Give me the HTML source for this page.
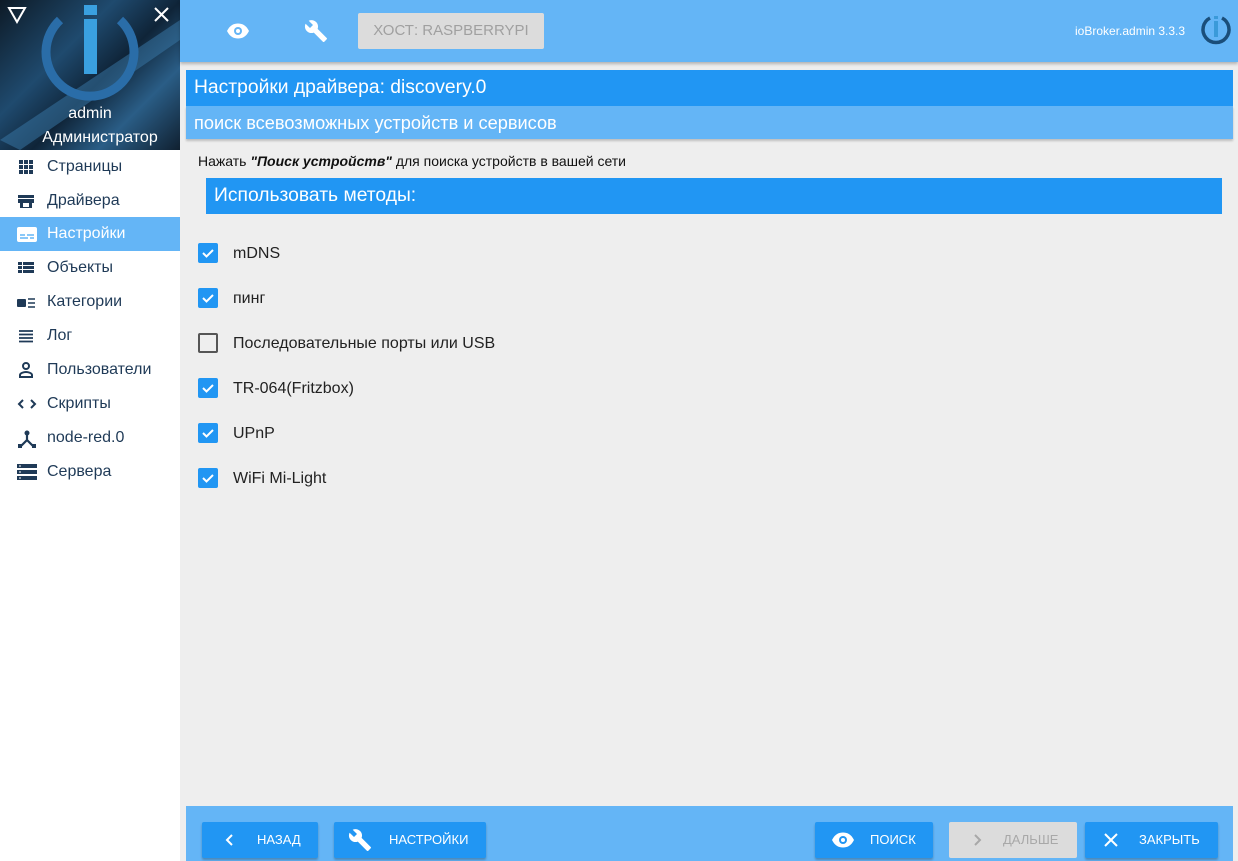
<!DOCTYPE html>
<html><head><meta charset="utf-8"><style>
*{box-sizing:border-box;margin:0;padding:0}
body{width:1238px;height:861px;overflow:hidden;background:#eeeeee;font-family:"Liberation Sans",sans-serif;position:relative}
.side{position:absolute;left:0;top:0;width:180px;height:861px;background:#fff}
.hdr{position:absolute;left:0;top:0;width:180px;height:150px;background:linear-gradient(135deg,#0d1a26 0%,#1f4a6e 35%,#0f2438 55%,#2a5d86 75%,#102030 100%);overflow:hidden}
.nav{position:absolute;left:0;width:180px;height:34px;font-size:16px;color:#1f3a57;line-height:34px;padding-left:47px}
.nav svg{position:absolute;left:17px;top:8px}
.nav.act{background:#64b5f6;color:#fff}
.top{position:absolute;left:180px;top:0;width:1058px;height:62px;background:#64b5f6;box-shadow:0 2px 3px rgba(0,0,0,.25)}
.host{position:absolute;left:178px;top:13px;width:186px;height:36px;background:#dcdcdc;border-radius:2px;color:#a0a0a0;font-size:15px;line-height:36px;text-align:center}
.t1{position:absolute;left:186px;top:70px;width:1047px;height:36px;background:#2196f3;color:#fff;font-size:19.3px;line-height:36px;padding-left:8px}
.t2{position:absolute;left:186px;top:106px;width:1047px;height:33px;background:#64b5f6;color:#fff;font-size:18.2px;line-height:35px;padding-left:8px;box-shadow:0 2px 2px rgba(0,0,0,.2)}
.note{position:absolute;left:198px;top:153px;font-size:14px;color:#111}
.t3{position:absolute;left:206px;top:178px;width:1016px;height:36px;background:#2196f3;color:#fff;font-size:19.3px;line-height:36px;padding-left:8px}
.cb{position:absolute;left:198px;width:20px;height:20px;border-radius:2px;background:#2196f3}
.cb.off{background:transparent;border:2px solid #555}
.lb{position:absolute;left:233px;font-size:16px;color:#222}
.foot{position:absolute;left:186px;top:806px;width:1047px;height:55px;background:#64b5f6}
.btn{position:absolute;top:16px;height:36px;background:#2196f3;color:#fff;font-size:13px;line-height:36px;border-radius:2px;box-shadow:0 2px 2px rgba(0,0,0,.25)}
.btn svg{position:absolute;top:8px}
.btn span{position:absolute}
</style></head><body>
<div class="side">
<div class="hdr">
<svg width="180" height="150" style="position:absolute;left:0;top:0">
<path d="M0 140 L180 20 L180 40 L20 150 Z" fill="#3a7aaa" opacity=".5"/>
<path d="M60 20 A44 44 0 1 0 120 20" fill="none" stroke="#2a6da8" stroke-width="9"/>
<rect x="84" y="5" width="13" height="10" fill="#3aa0e0"/>
<rect x="84" y="19" width="13" height="55" fill="#3aa0e0"/>
<path d="M9 8 L25 8 L17 22 Z" fill="none" stroke="#fff" stroke-width="2"/>
<path d="M155 8 L168 21 M168 8 L155 21" stroke="#fff" stroke-width="2"/>
<text x="90" y="118" fill="#fff" font-size="16" text-anchor="middle" font-family="Liberation Sans">admin</text>
<text x="100" y="142" fill="#fff" font-size="16" text-anchor="middle" font-family="Liberation Sans">Администратор</text>
</svg></div>
<div class="nav" style="top:150px"><svg width="18" height="18"><g fill="#1f3a57"><rect x="2" y="2" width="4" height="4"/><rect x="7" y="2" width="4" height="4"/><rect x="12" y="2" width="4" height="4"/><rect x="2" y="7" width="4" height="4"/><rect x="7" y="7" width="4" height="4"/><rect x="12" y="7" width="4" height="4"/><rect x="2" y="12" width="4" height="4"/><rect x="7" y="12" width="4" height="4"/><rect x="12" y="12" width="4" height="4"/></g></svg>Страницы</div>
<div class="nav" style="top:184px"><svg width="18" height="18"><path d="M1 3h16v3H1z M1 7h16v4H1z M3 11h3v5H3z M12 11h3v5h-3z M3 15h12v1H3z" fill="#1f3a57"/></svg>Драйвера</div>
<div class="nav act" style="top:217px"><svg width="20" height="18"><rect x="0" y="2" width="20" height="15" rx="2" fill="#fff"/><path d="M3 10h5M10 10h7M3 13h8M13 13h4" stroke="#64b5f6" stroke-width="1.5"/></svg>Настройки</div>
<div class="nav" style="top:251px"><svg width="18" height="18"><path d="M1 3h4v3H1zM6 3h11v3H6zM1 7h4v3H1zM6 7h11v3H6zM1 11h4v3H1zM6 11h11v3H6z" fill="#1f3a57"/></svg>Объекты</div>
<div class="nav" style="top:285px"><svg width="20" height="18"><rect x="0" y="6" width="9" height="8" rx="1" fill="#1f3a57"/><path d="M11 6h7M11 10h7M11 14h7" stroke="#1f3a57" stroke-width="1.6"/></svg>Категории</div>
<div class="nav" style="top:319px"><svg width="18" height="18"><path d="M2 4h14M2 7.5h14M2 11h14M2 14.5h14" stroke="#1f3a57" stroke-width="1.7"/></svg>Лог</div>
<div class="nav" style="top:353px"><svg width="18" height="18"><circle cx="9" cy="5" r="3" fill="none" stroke="#1f3a57" stroke-width="2"/><path d="M3 16v-2c0-2 4-3 6-3s6 1 6 3v2z" fill="none" stroke="#1f3a57" stroke-width="2"/></svg>Пользователи</div>
<div class="nav" style="top:387px"><svg width="20" height="18"><path d="M6 5L2 9l4 4M14 5l4 4-4 4" fill="none" stroke="#1f3a57" stroke-width="2"/></svg>Скрипты</div>
<div class="nav" style="top:421px"><svg width="20" height="20"><circle cx="10" cy="4" r="2.5" fill="#1f3a57"/><path d="M10 5v6L4 17M10 11l6 6" stroke="#1f3a57" stroke-width="2.2" fill="none"/><rect x="1" y="15" width="4" height="4" fill="#1f3a57"/><rect x="15" y="15" width="4" height="4" fill="#1f3a57"/></svg>node-red.0</div>
<div class="nav" style="top:455px"><svg width="20" height="18"><rect x="0" y="1" width="20" height="4" fill="#1f3a57"/><rect x="0" y="7" width="20" height="4" fill="#1f3a57"/><rect x="0" y="13" width="20" height="4" fill="#1f3a57"/><g fill="#fff"><rect x="2" y="2.5" width="2" height="1"/><rect x="2" y="8.5" width="2" height="1"/><rect x="2" y="14.5" width="2" height="1"/></g></svg>Сервера</div>
</div>
<div class="top">
<svg width="24" height="24" style="position:absolute;left:46px;top:19px"><path d="M1 12C4 6 8 4.5 12 4.5S20 6 23 12C20 18 16 19.5 12 19.5S4 18 1 12z" fill="#fff"/><circle cx="12" cy="12" r="4" fill="#64b5f6"/><circle cx="12" cy="12" r="2" fill="#fff"/></svg>
<svg width="24" height="24" style="position:absolute;left:124px;top:19px"><path d="M22.7 19l-9.1-9.1c.9-2.3.4-5-1.5-6.9-2-2-5-2.4-7.4-1.3L9 6 6 9 1.6 4.7C.4 7.1.9 10.1 2.9 12.1c1.9 1.9 4.6 2.4 6.9 1.5l9.1 9.1c.4.4 1 .4 1.4 0l2.3-2.3c.5-.4.5-1.1.1-1.4z" fill="#fff"/></svg>
<div class="host">ХОСТ: RASPBERRYPI</div>
<div style="position:absolute;left:895px;top:24px;color:#fff;font-size:12px">ioBroker.admin 3.3.3</div>
<svg width="34" height="34" style="position:absolute;left:1019px;top:14px"><path d="M11 4 A13 13 0 1 0 23 4" fill="none" stroke="#1a4e7a" stroke-width="3.5"/><rect x="15" y="2" width="4" height="3" fill="#3a9ad9"/><rect x="15" y="7" width="4" height="16" fill="#3a9ad9"/></svg>
</div>
<div class="t1">Настройки драйвера: discovery.0</div>
<div class="t2">поиск всевозможных устройств и сервисов</div>
<div class="note">Нажать <b><i>"Поиск устройств"</i></b> для поиска устройств в вашей сети</div>
<div class="t3">Использовать методы:</div>
<div class="cb" style="top:243px"><svg width="20" height="20"><path d="M5 10l3.5 3.5L15 7" fill="none" stroke="#fff" stroke-width="2"/></svg></div><div class="lb" style="top:245px">mDNS</div>
<div class="cb" style="top:288px"><svg width="20" height="20"><path d="M5 10l3.5 3.5L15 7" fill="none" stroke="#fff" stroke-width="2"/></svg></div><div class="lb" style="top:290px">пинг</div>
<div class="cb off" style="top:333px"></div><div class="lb" style="top:335px">Последовательные порты или USB</div>
<div class="cb" style="top:378px"><svg width="20" height="20"><path d="M5 10l3.5 3.5L15 7" fill="none" stroke="#fff" stroke-width="2"/></svg></div><div class="lb" style="top:380px">TR-064(Fritzbox)</div>
<div class="cb" style="top:423px"><svg width="20" height="20"><path d="M5 10l3.5 3.5L15 7" fill="none" stroke="#fff" stroke-width="2"/></svg></div><div class="lb" style="top:425px">UPnP</div>
<div class="cb" style="top:468px"><svg width="20" height="20"><path d="M5 10l3.5 3.5L15 7" fill="none" stroke="#fff" stroke-width="2"/></svg></div><div class="lb" style="top:470px">WiFi Mi-Light</div>
<div class="foot">
<div class="btn" style="left:16px;width:116px"><svg width="20" height="20" style="left:18px"><path d="M12 5l-5 5 5 5" fill="none" stroke="#fff" stroke-width="2"/></svg><span style="left:55px">НАЗАД</span></div>
<div class="btn" style="left:148px;width:152px"><svg width="24" height="24" style="left:14px;top:6px"><path d="M22.7 19l-9.1-9.1c.9-2.3.4-5-1.5-6.9-2-2-5-2.4-7.4-1.3L9 6 6 9 1.6 4.7C.4 7.1.9 10.1 2.9 12.1c1.9 1.9 4.6 2.4 6.9 1.5l9.1 9.1c.4.4 1 .4 1.4 0l2.3-2.3c.5-.4.5-1.1.1-1.4z" fill="#fff"/></svg><span style="left:55px">НАСТРОЙКИ</span></div>
<div class="btn" style="left:629px;width:118px"><svg width="24" height="24" style="left:16px;top:6px"><path d="M1 12C4 6 8 4.5 12 4.5S20 6 23 12C20 18 16 19.5 12 19.5S4 18 1 12z" fill="#fff"/><circle cx="12" cy="12" r="4" fill="#2196f3"/><circle cx="12" cy="12" r="2" fill="#fff"/></svg><span style="left:55px">ПОИСК</span></div>
<div class="btn" style="left:763px;width:128px;background:#dcdcdc;color:#a8a8a8;box-shadow:none"><svg width="20" height="20" style="left:18px"><path d="M8 5l5 5-5 5" fill="none" stroke="#a8a8a8" stroke-width="2"/></svg><span style="left:54px">ДАЛЬШЕ</span></div>
<div class="btn" style="left:899px;width:133px"><svg width="20" height="20" style="left:16px"><path d="M4 4l12 12M16 4L4 16" stroke="#fff" stroke-width="2"/></svg><span style="left:54px">ЗАКРЫТЬ</span></div>
</div>
</body></html>
